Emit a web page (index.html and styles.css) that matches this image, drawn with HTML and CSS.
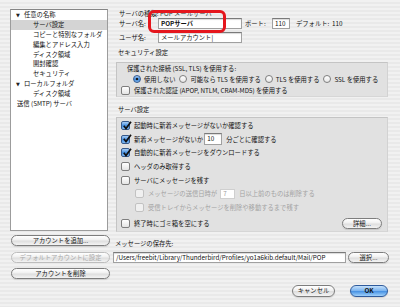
FILE: index.html
```html
<!DOCTYPE html>
<html>
<head>
    <meta charset="utf-8">
    <title>アカウント設定</title>
    <link rel="stylesheet" href="styles.css">
</head>
<body>
    <div class="window">
        <div class="sidebar">
            <div class="tree">
                <div class="node"><span class="twisty">▼</span>任意の名称</div>
                <div class="node child selected">サーバ設定</div>
                <div class="node child">コピーと特別なフォルダ</div>
                <div class="node child">編集とアドレス入力</div>
                <div class="node child">ディスク領域</div>
                <div class="node child">開封確認</div>
                <div class="node child">セキュリティ</div>
                <div class="node"><span class="twisty">▼</span>ローカルフォルダ</div>
                <div class="node child">ディスク領域</div>
                <div class="node plain">送信 (SMTP) サーバ</div>
            </div>
            <div class="account-buttons">
                <button class="btn">アカウントを追加...</button>
                <button class="btn" disabled>デフォルトアカウントに設定</button>
                <button class="btn">アカウントを削除</button>
            </div>
        </div>

        <div class="settings">
            <div class="field-row first">
                <span class="field-label">サーバの種類:</span>
                <span class="value">POP メールサーバ</span>
            </div>
            <div class="field-row">
                <span class="field-label">サーバ名:</span>
                <span class="input server-name bold">POPサーバ</span>
                <span class="port-label">ポート:</span>
                <span class="input port">110</span>
                <span class="default-port">デフォルト:&nbsp; 110</span>
            </div>
            <div class="field-row gap">
                <span class="field-label">ユーザ名:</span>
                <span class="input server-name">メールアカウント|</span>
            </div>

            <div class="section-title">セキュリティ設定</div>
            <div class="group security">
                <div class="line head">保護された接続 (SSL, TLS) を使用する:</div>
                <div class="line radios">
                    <span class="rb on"></span><span class="rb-text">使用しない</span>
                    <span class="rb"></span><span class="rb-text">可能なら TLS を使用する</span>
                    <span class="rb"></span><span class="rb-text">TLS を使用する</span>
                    <span class="rb"></span><span class="rb-text">SSL を使用する</span>
                </div>
                <div class="line">
                    <span class="cb"></span>保護された認証 (APOP, NTLM, CRAM-MD5) を使用する
                </div>
            </div>

            <div class="section-title second">サーバ設定</div>
            <div class="group server">
                <div class="row"><span class="cb on"><svg viewBox="0 0 10 10"><path d="M1.8 4.8 L4 7.6 L9 0.8"/></svg></span>起動時に新着メッセージがないか確認する</div>
                <div class="row"><span class="cb on"><svg viewBox="0 0 10 10"><path d="M1.8 4.8 L4 7.6 L9 0.8"/></svg></span>新着メッセージがないか<span class="input minutes">10</span><span class="after">分ごとに確認する</span></div>
                <div class="row"><span class="cb on"><svg viewBox="0 0 10 10"><path d="M1.8 4.8 L4 7.6 L9 0.8"/></svg></span>自動的に新着メッセージをダウンロードする</div>
                <div class="row"><span class="cb"></span>ヘッダのみ取得する</div>
                <div class="row"><span class="cb"></span>サーバにメッセージを残す</div>
                <div class="row sub disabled"><span class="cb"></span>メッセージの送信日時が<span class="input days">7</span><span class="after">日以上前のものは削除する</span></div>
                <div class="row sub disabled"><span class="cb"></span>受信トレイからメッセージを削除や移動するまで残す</div>
                <div class="row last"><span class="cb"></span>終了時にゴミ箱を空にする<button class="btn detail">詳細...</button></div>
            </div>

            <div class="section-title store">メッセージの保存先:</div>
            <div class="path-row">
                <span class="input path">/Users/freebit/Library/Thunderbird/Profiles/yo1a6kib.default/Mail/POP</span>
                <button class="btn choose">選択...</button>
            </div>

            <div class="dialog-buttons">
                <button class="btn cancel">キャンセル</button>
                <button class="btn ok">OK</button>
            </div>
        </div>

        <div class="callout"></div>
    </div>
</body>
</html>
```

FILE: styles.css
```css
* {
    box-sizing: border-box;
}

body {
    margin: 0;
    font-family: 'Noto Sans CJK JP', 'Noto Sans', sans-serif;
    font-size: 6.3px;
    color: #111;
    background: repeating-linear-gradient(#f1f1f1 0, #f1f1f1 2px, #e9e9e9 2px, #e9e9e9 4px);
}

.window {
    position: relative;
    width: 400px;
    height: 307px;
    display: flex;
    overflow: hidden;
}

/* left column */
.sidebar {
    width: 100px;
    margin: 9px 0 0 10px;
}

.tree {
    width: 98px;
    height: 222px;
    background: #fff;
    border: 1px solid #9c9c9c;
    border-top-color: #858585;
}

.node {
    height: 9.9px;
    line-height: 9.9px;
    padding-left: 1px;
    white-space: nowrap;
}

.node.child {
    padding-left: 22px;
}

.node.plain {
    padding-left: 6px;
}

.node.selected {
    background: #d4d4d4;
}

.twisty {
    display: inline-block;
    width: 12px;
    font-family: 'DejaVu Sans', sans-serif;
    font-size: 5px;
    text-align: center;
    color: #222;
}

.account-buttons {
    display: flex;
    flex-direction: column;
    gap: 5.5px;
    margin: 4px 0 0 1px;
}

.btn {
    height: 11px;
    padding: 0;
    font-family: inherit;
    font-size: 6.3px;
    line-height: 9px;
    color: #111;
    border: 1px solid #7d7d7d;
    border-radius: 6px;
    background: linear-gradient(#ffffff 0%, #f0f0f0 45%, #dedede 55%, #f4f4f4 100%);
    box-shadow: 0 1px 1px rgba(0, 0, 0, 0.12);
    white-space: nowrap;
}

.account-buttons .btn {
    width: 99px;
}

.btn:disabled {
    color: #a8a8a8;
    border-color: #bdbdbd;
    box-shadow: none;
}

/* right column */
.settings {
    width: 276px;
    margin-left: 3px;
}

.field-row {
    display: flex;
    align-items: center;
    height: 11px;
    white-space: nowrap;
}

.field-row.first {
    margin-top: 8px;
    height: 10px;
}

.field-row.gap {
    margin-top: 3px;
}

.field-label {
    width: 45px;
    padding-left: 6px;
}

.value {
    padding-left: 2px;
    color: #333;
}

.input {
    display: inline-block;
    height: 11px;
    line-height: 9px;
    padding: 0 2px;
    background: #fff;
    border: 1px solid #a0a0a0;
    border-top-color: #7a7a7a;
    box-shadow: inset 0 1px 1px rgba(0, 0, 0, 0.15);
    white-space: nowrap;
    overflow: hidden;
}

.bold {
    font-weight: 700;
}

.server-name {
    width: 84px;
}

.port-label {
    margin-left: 3px;
    width: 27px;
}

.port {
    width: 18px;
}

.default-port {
    margin-left: 6px;
}

.section-title {
    height: 10px;
    line-height: 10px;
    margin-top: 5px;
    padding-left: 5px;
}

.section-title.second {
    margin-top: 8px;
}

.section-title.store {
    margin-top: 7px;
    padding-left: 2px;
}

.group {
    width: 272px;
    margin: 4px 0 0 3px;
    padding-left: 4px;
    background: #e1e1e1;
    border: 1px solid #c4c4c4;
    border-right-color: #d2d2d2;
    border-bottom-color: #d6d6d6;
}

.group.server {
    margin-top: 2px;
    padding-top: 1px;
    padding-right: 5px;
}

.line {
    display: flex;
    align-items: center;
    height: 10px;
    margin-bottom: 1px;
    white-space: nowrap;
}

.line.head {
    padding-left: 6px;
}

.line.radios {
    padding-left: 12px;
}

.rb {
    width: 8px;
    height: 8px;
    margin-right: 3px;
    border-radius: 50%;
    border: 1px solid #7e7e7e;
    background: linear-gradient(#ffffff, #e6e6e6);
    flex: none;
}

.rb.on {
    position: relative;
    border-color: #35598c;
    background: radial-gradient(circle at 50% 50%, #1a1a1a 0, #1a1a1a 1.4px, transparent 1.6px), linear-gradient(#a7cdf6, #3c8ae0 55%, #7fb8f3);
}

.rb-text {
    margin-right: 4px;
}

.cb {
    position: relative;
    width: 9px;
    height: 9px;
    margin-right: 4px;
    border: 1px solid #7e7e7e;
    border-radius: 2px;
    background: linear-gradient(#ffffff, #e4e4e4);
    flex: none;
}

.cb.on {
    border-color: #35598c;
    background: linear-gradient(#a9cff7, #3f8be0 55%, #84bcf4);
}

.cb svg {
    position: absolute;
    left: -0.5px;
    top: -1.5px;
    width: 10px;
    height: 10px;
    overflow: visible;
}

.cb svg path {
    fill: none;
    stroke: #101010;
    stroke-width: 1.7;
}

.row {
    display: flex;
    align-items: center;
    height: 13.6px;
    white-space: nowrap;
}

.row.sub {
    padding-left: 14px;
}

.row.last {
    margin-top: 3px;
}

.disabled {
    color: #a3a3a3;
}

.disabled .cb {
    border-color: #c2c2c2;
    background: #f0f0f0;
}

.disabled .input {
    border-color: #cfcfcf;
    box-shadow: none;
    color: #9a9a9a;
}

.minutes {
    width: 18px;
    margin-left: 1px;
    height: 12px;
    line-height: 10px;
}

.days {
    width: 15px;
    height: 10px;
    line-height: 8px;
    margin-left: 3px;
}

.after {
    margin-left: 4px;
}

.detail {
    width: 40px;
    margin-left: auto;
}

.path-row {
    display: flex;
    align-items: center;
    margin-top: 3px;
}

.path {
    width: 233px;
}

.choose {
    width: 41px;
    margin-left: 2px;
}

.dialog-buttons {
    display: flex;
    justify-content: flex-end;
    gap: 15px;
    margin-top: 22px;
    padding-right: 1px;
}

.dialog-buttons .btn {
    height: 12px;
    line-height: 10px;
}

.cancel {
    width: 43px;
}

.ok {
    width: 38px;
    font-weight: 700;
    border-color: #2f5b9c;
    background: linear-gradient(#c4e0fb 0%, #7fb6f0 45%, #4b94e4 55%, #9fd0fa 100%);
}

/* red annotation box around the server name field */
.callout {
    position: absolute;
    left: 148px;
    top: 10px;
    width: 78px;
    height: 23px;
    border: 3px solid #e5161d;
    border-radius: 6px;
}
```
